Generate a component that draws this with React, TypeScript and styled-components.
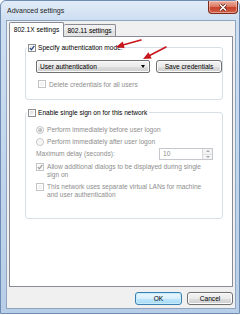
import * as React from 'react';
import styled, { createGlobalStyle, css } from 'styled-components';

const GlobalStyle = createGlobalStyle`
  html, body {
    margin: 0;
    padding: 0;
    background: #ffffff;
  }
  body {
    font-family: 'Liberation Sans', Arial, sans-serif;
    font-size: 6.6px;
    color: #000000;
  }
  * {
    box-sizing: border-box;
  }
`;

const Window = styled.div`
  width: 240px;
  height: 314px;
  border: 1px solid #6f8db3;
  border-radius: 6px 6px 0 0;
  background: linear-gradient(180deg, #e2ecf7 0px, #cddeF1 19px, #c0d5ec 55%, #b8cee8 100%);
  padding: 0 3px 4px 5px;
  display: flex;
  flex-direction: column;
`;

const TitleBar = styled.div`
  height: 19px;
  display: flex;
  align-items: flex-start;
  justify-content: space-between;
`;

const Title = styled.span`
  padding-left: 1px;
  font-size: 7px;
  line-height: 19px;
  color: #1e1e1e;
`;

const CloseButton = styled.div`
  width: 30px;
  height: 13px;
  margin-right: -2px;
  border: 1px solid #7d2a1d;
  border-top: none;
  border-radius: 0 0 4px 4px;
  background: linear-gradient(180deg, #eab0a2 0%, #dd7c66 45%, #c8422a 55%, #d2604a 100%);
  box-shadow: inset 0 0 0 1px rgba(255, 220, 210, 0.5);
  display: flex;
  align-items: center;
  justify-content: center;
`;

const Client = styled.div`
  flex: 1;
  background: #f0f0f0;
  border: 1px solid #8ea4bf;
  padding: 1px 2px 3px 2px;
  display: flex;
  flex-direction: column;
`;

const TabStrip = styled.div`
  height: 15px;
  display: flex;
  align-items: flex-end;
  position: relative;
  z-index: 1;
`;

const Tab = styled.div<{ $active?: boolean }>`
  border: 1px solid #898c95;
  border-bottom: none;
  border-radius: 2px 2px 0 0;
  text-align: center;
  white-space: nowrap;
  ${(p) =>
    p.$active
      ? css`
          width: 55px;
          height: 15px;
          line-height: 13px;
          background: #ffffff;
        `
      : css`
          width: 52px;
          height: 12px;
          margin-bottom: 1px;
          line-height: 11px;
          border-left: none;
          background: linear-gradient(180deg, #f3f3f3 0%, #ebebeb 50%, #dedede 51%, #e6e6e6 100%);
        `}
`;

const Panel = styled.div`
  position: relative;
  flex: 1;
  margin-top: -1px;
  background: #ffffff;
  border: 1px solid #898c95;
  padding: 6px 9px 0 15px;
`;

const GroupBox = styled.fieldset<{ $bottom: number }>`
  margin: 0;
  min-width: 0;
  border: 1px solid #d5dfe5;
  border-radius: 3px;
  padding: 8px 0 ${(p) => p.$bottom}px 10px;
  & + & {
    margin-top: 8px;
  }
`;

const Legend = styled.legend`
  margin-left: -9px;
  padding: 0 2px 0 1px;
  height: 9px;
  display: flex;
  align-items: center;
  gap: 2px;
  line-height: 9px;
`;

const Row = styled.div<{ $mt?: number }>`
  display: flex;
  align-items: center;
  gap: 6px;
  margin-top: ${(p) => p.$mt ?? 0}px;
`;

const Option = styled.label<{ $disabled?: boolean; $mt?: number; $indent?: number }>`
  display: flex;
  align-items: flex-start;
  gap: 3px;
  margin-top: ${(p) => p.$mt ?? 0}px;
  padding-left: ${(p) => p.$indent ?? 0}px;
  line-height: 9px;
  color: ${(p) => (p.$disabled ? '#8d8d8d' : '#000000')};
`;

const WrapText = styled.span`
  width: 160px;
  line-height: 8px;
`;

const Box = styled.span<{ $disabled?: boolean; $round?: boolean }>`
  flex: none;
  width: 8px;
  height: 8px;
  margin-top: ${(p) => (p.$round ? 0.5 : 0)}px;
  border: 1px solid ${(p) => (p.$disabled ? '#c4c4c4' : '#8e8f8f')};
  border-radius: ${(p) => (p.$round ? '50%' : '0')};
  background: ${(p) =>
    p.$disabled
      ? '#f4f4f4'
      : 'linear-gradient(135deg, #cfd3d9 0%, #eef0f2 60%, #fbfbfb 100%)'};
  box-shadow: inset 0 0 0 1px #ffffff;
  display: flex;
  align-items: center;
  justify-content: center;
`;

const Dot = styled.span`
  width: 4px;
  height: 4px;
  border-radius: 50%;
  background: radial-gradient(circle at 40% 40%, #d8d8d8, #9a9a9a);
`;

const Combo = styled.div`
  width: 114px;
  height: 13px;
  border: 1px solid #707070;
  border-radius: 2px;
  background: linear-gradient(180deg, #f2f2f2 0%, #ebebeb 50%, #dddddd 51%, #cfcfcf 100%);
  box-shadow: inset 0 0 0 1px #fbfbfb;
  padding: 0 4px 0 3px;
  display: flex;
  align-items: center;
  justify-content: space-between;
  line-height: 11px;
`;

const DropArrow = styled.span`
  width: 0;
  height: 0;
  border-left: 2.5px solid transparent;
  border-right: 2.5px solid transparent;
  border-top: 3px solid #000000;
`;

const PushButton = styled.button<{ $width: number; $default?: boolean }>`
  width: ${(p) => p.$width}px;
  height: 13px;
  padding: 0;
  font: inherit;
  color: #000000;
  line-height: 11px;
  border-radius: 3px;
  border: 1px solid ${(p) => (p.$default ? '#3c7fb1' : '#707070')};
  background: ${(p) =>
    p.$default
      ? 'linear-gradient(180deg, #eaf6fd 0%, #d9f0fc 50%, #bee6fd 51%, #a7d9f5 100%)'
      : 'linear-gradient(180deg, #f2f2f2 0%, #ebebeb 50%, #dddddd 51%, #cfcfcf 100%)'};
  box-shadow: inset 0 0 0 1px ${(p) => (p.$default ? '#c6ecfc' : '#fcfcfc')};
`;

const DelayLabel = styled.span`
  width: 123px;
  color: #8d8d8d;
  line-height: 12px;
`;

const Spin = styled.div`
  width: 54px;
  height: 12px;
  border: 1px solid #c5c8cc;
  background: #ffffff;
  display: flex;
`;

const SpinValue = styled.span`
  flex: 1;
  padding-left: 3px;
  line-height: 10px;
  color: #8d8d8d;
`;

const SpinButtons = styled.div`
  width: 10px;
  display: flex;
  flex-direction: column;
  border-left: 1px solid #d8d8d8;
  background: #f4f4f4;
`;

const SpinHalf = styled.span<{ $up?: boolean }>`
  flex: 1;
  display: flex;
  align-items: center;
  justify-content: center;
  &::after {
    content: '';
    border-left: 2px solid transparent;
    border-right: 2px solid transparent;
    ${(p) =>
      p.$up
        ? css`border-bottom: 2px solid #a9a9a9;`
        : css`border-top: 2px solid #a9a9a9;`}
  }
  & + & {
    border-top: 1px solid #e0e0e0;
  }
`;

const ButtonBar = styled.div`
  margin-top: 5px;
  display: flex;
  justify-content: flex-end;
  gap: 5px;
`;

const Arrows = styled.svg`
  position: absolute;
  left: 0;
  top: 0;
  width: 100%;
  height: 100%;
  pointer-events: none;
  overflow: visible;
`;

const Check = ({ color }: { color: string }) => (
  <svg width="6" height="6" viewBox="0 0 6 6">
    <path d="M0.8 3.1 L2.4 4.8 L5.3 0.9" fill="none" stroke={color} strokeWidth="1.3" />
  </svg>
);

const App = () => {
  return (
    <>
      <GlobalStyle />
      <Window>
        <TitleBar>
          <Title>Advanced settings</Title>
          <CloseButton>
            <svg width="10" height="9" viewBox="0 0 10 9">
              <path d="M2 1.5 L8 7.5 M8 1.5 L2 7.5" stroke="#5a1a10" strokeWidth="3" />
              <path d="M2 1.5 L8 7.5 M8 1.5 L2 7.5" stroke="#ffffff" strokeWidth="1.6" />
            </svg>
          </CloseButton>
        </TitleBar>
        <Client>
          <TabStrip>
            <Tab $active>802.1X settings</Tab>
            <Tab>802.11 settings</Tab>
          </TabStrip>
          <Panel>
            <GroupBox $bottom={10}>
              <Legend>
                <Box>
                  <Check color="#2e4a86" />
                </Box>
                Specify authentication mode:
              </Legend>
              <Row>
                <Combo>
                  User authentication
                  <DropArrow />
                </Combo>
                <PushButton $width={66}>Save credentials</PushButton>
              </Row>
              <Option $disabled $mt={7} $indent={2}>
                <Box $disabled />
                Delete credentials for all users
              </Option>
            </GroupBox>
            <GroupBox $bottom={19}>
              <Legend>
                <Box />
                Enable single sign on for this network
              </Legend>
              <Option $disabled>
                <Box $disabled $round>
                  <Dot />
                </Box>
                Perform immediately before user logon
              </Option>
              <Option $disabled $mt={3}>
                <Box $disabled $round />
                Perform immediately after user logon
              </Option>
              <Row $mt={2} style={{ gap: 0 }}>
                <DelayLabel>Maximum delay (seconds):</DelayLabel>
                <Spin>
                  <SpinValue>10</SpinValue>
                  <SpinButtons>
                    <SpinHalf $up />
                    <SpinHalf />
                  </SpinButtons>
                </Spin>
              </Row>
              <Option $disabled $mt={3}>
                <Box $disabled>
                  <Check color="#a0a0a0" />
                </Box>
                <WrapText>Allow additional dialogs to be displayed during single sign on</WrapText>
              </Option>
              <Option $disabled $mt={4}>
                <Box $disabled />
                <WrapText>This network uses separate virtual LANs for machine and user authentication</WrapText>
              </Option>
            </GroupBox>
            <Arrows>
              <g stroke="#c8161d" strokeWidth="1.6" strokeLinecap="round">
                <line x1="131" y1="3" x2="113.7" y2="7.8" />
                <line x1="156" y1="10" x2="140.1" y2="18.3" />
              </g>
              <polygon points="106,10 114.7,11.2 112.8,4.5" fill="#c8161d" />
              <polygon points="133,22 141.7,21.4 138.5,15.2" fill="#c8161d" />
            </Arrows>
          </Panel>
          <ButtonBar>
            <PushButton $width={47} $default>
              OK
            </PushButton>
            <PushButton $width={46}>Cancel</PushButton>
          </ButtonBar>
        </Client>
      </Window>
    </>
  );
};

export default App;
